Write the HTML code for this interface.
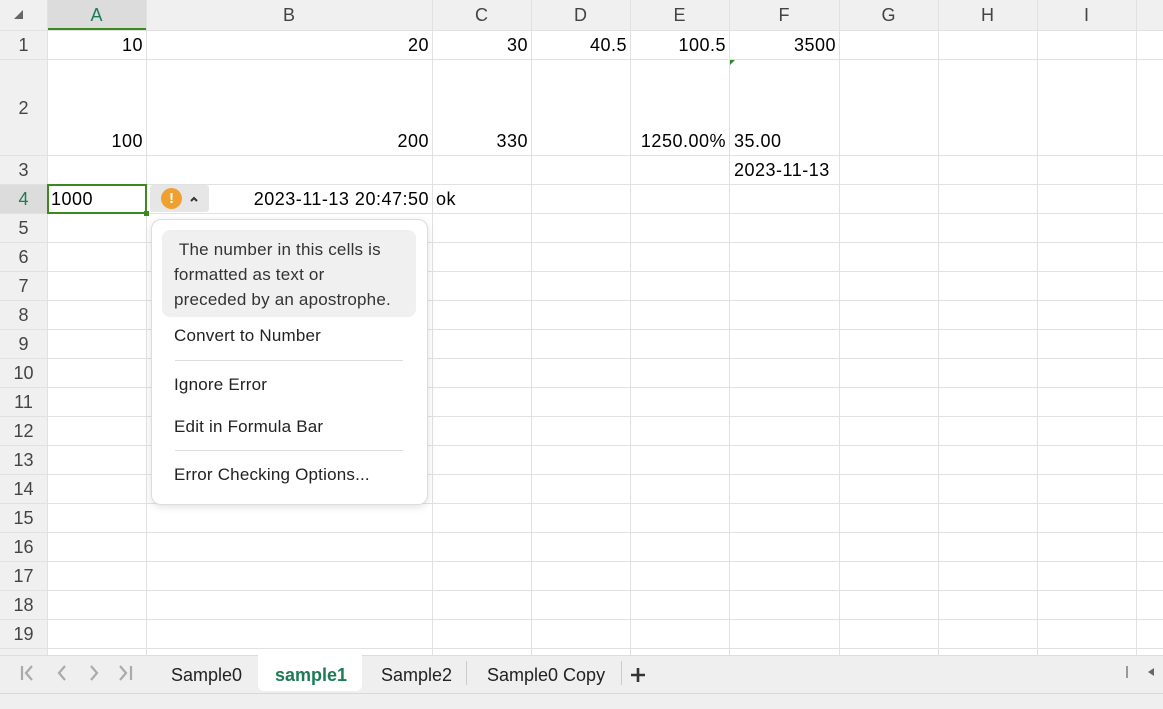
<!DOCTYPE html>
<html><head><style>
*{margin:0;padding:0;box-sizing:border-box}
body{width:1163px;height:709px;overflow:hidden;background:#fff;font-family:"Liberation Sans",sans-serif;position:relative;color:#000}
.a{position:absolute}
.vl{position:absolute;width:1px;background:#e1e1e1;top:0;height:655px}
.hl{position:absolute;height:1px;background:#e1e1e1;left:0;width:1163px}
.ch{position:absolute;top:0;height:30px;line-height:30px;text-align:center;font-size:18px;color:#444}
.rh{position:absolute;left:0;width:47px;text-align:center;font-size:18px;color:#444}
.t{position:absolute;font-size:18px;letter-spacing:0.5px;white-space:nowrap}
.r{text-align:right}
.mi{position:absolute;left:174px;font-size:17px;letter-spacing:0.2px;color:#222}
</style></head><body>
<div class="a" style="left:0;top:0;width:1163px;height:30px;background:#f0f0f0"></div>
<div class="a" style="left:0;top:0;width:47px;height:655px;background:#f0f0f0"></div>
<div class="a" style="left:47px;top:0;width:99px;height:30px;background:#dcdcdc;border-bottom:2px solid #3b8a1e"></div>
<div class="a" style="left:0;top:184px;width:47px;height:29px;background:#dcdcdc"></div>
<div class="a" style="left:14px;top:10px;width:0;height:0;border-left:9px solid transparent;border-bottom:9px solid #666"></div>

<div class="vl" style="left:47px"></div><div class="vl" style="left:146px"></div><div class="vl" style="left:432px"></div><div class="vl" style="left:531px"></div><div class="vl" style="left:630px"></div><div class="vl" style="left:729px"></div><div class="vl" style="left:839px"></div><div class="vl" style="left:938px"></div><div class="vl" style="left:1037px"></div><div class="vl" style="left:1136px"></div>
<div class="hl" style="top:30px"></div><div class="hl" style="top:59px"></div><div class="hl" style="top:155px"></div><div class="hl" style="top:184px"></div><div class="hl" style="top:213px"></div><div class="hl" style="top:242px"></div><div class="hl" style="top:271px"></div><div class="hl" style="top:300px"></div><div class="hl" style="top:329px"></div><div class="hl" style="top:358px"></div><div class="hl" style="top:387px"></div><div class="hl" style="top:416px"></div><div class="hl" style="top:445px"></div><div class="hl" style="top:474px"></div><div class="hl" style="top:503px"></div><div class="hl" style="top:532px"></div><div class="hl" style="top:561px"></div><div class="hl" style="top:590px"></div><div class="hl" style="top:619px"></div><div class="hl" style="top:648px"></div>

<div class="ch" style="left:47px;width:99px;color:#1e7b55">A</div><div class="ch" style="left:146px;width:286px">B</div><div class="ch" style="left:432px;width:99px">C</div><div class="ch" style="left:531px;width:99px">D</div><div class="ch" style="left:630px;width:99px">E</div><div class="ch" style="left:729px;width:110px">F</div><div class="ch" style="left:839px;width:99px">G</div><div class="ch" style="left:938px;width:99px">H</div><div class="ch" style="left:1037px;width:99px">I</div>

<div class="rh" style="top:31px;line-height:29px">1</div>
<div class="rh" style="top:60px;line-height:96px">2</div>
<div class="rh" style="top:156px;line-height:29px">3</div>
<div class="rh" style="top:185px;line-height:29px;color:#1e7b55">4</div>
<div class="rh" style="top:214px;line-height:29px">5</div><div class="rh" style="top:243px;line-height:29px">6</div><div class="rh" style="top:272px;line-height:29px">7</div><div class="rh" style="top:301px;line-height:29px">8</div><div class="rh" style="top:330px;line-height:29px">9</div><div class="rh" style="top:359px;line-height:29px">10</div><div class="rh" style="top:388px;line-height:29px">11</div><div class="rh" style="top:417px;line-height:29px">12</div><div class="rh" style="top:446px;line-height:29px">13</div><div class="rh" style="top:475px;line-height:29px">14</div><div class="rh" style="top:504px;line-height:29px">15</div><div class="rh" style="top:533px;line-height:29px">16</div><div class="rh" style="top:562px;line-height:29px">17</div><div class="rh" style="top:591px;line-height:29px">18</div><div class="rh" style="top:620px;line-height:29px">19</div>

<div class="t r" style="left:47px;width:96px;top:35px">10</div>
<div class="t r" style="left:146px;width:283px;top:35px">20</div>
<div class="t r" style="left:432px;width:96px;top:35px">30</div>
<div class="t r" style="left:531px;width:96px;top:35px">40.5</div>
<div class="t r" style="left:630px;width:96px;top:35px">100.5</div>
<div class="t r" style="left:729px;width:107px;top:35px">3500</div>
<div class="a" style="left:730px;top:60px;width:0;height:0;border-top:5px solid #2a8a2a;border-right:5px solid transparent"></div>
<div class="t r" style="left:47px;width:96px;top:131px">100</div>
<div class="t r" style="left:146px;width:283px;top:131px">200</div>
<div class="t r" style="left:432px;width:96px;top:131px">330</div>
<div class="t r" style="left:630px;width:96px;top:131px">1250.00%</div>
<div class="t" style="left:734px;top:131px">35.00</div>
<div class="t" style="left:734px;top:160px">2023-11-13</div>
<div class="t" style="left:51px;top:189px">1000</div>
<div class="t r" style="left:146px;width:283px;top:189px">2023-11-13 20:47:50</div>
<div class="t" style="left:436px;top:189px">ok</div>

<div class="a" style="left:47px;top:184px;width:100px;height:30px;border:2px solid #3b8a1e"></div>
<div class="a" style="left:144px;top:211px;width:5px;height:5px;background:#3b8a1e"></div>

<div class="a" style="left:150px;top:185px;width:59px;height:27px;background:#e6e6e6;border-radius:3px"></div>
<div class="a" style="left:161px;top:188px;width:21px;height:21px;border-radius:50%;background:#f0a030;color:#fff;font-weight:bold;font-size:15px;text-align:center;line-height:21px">!</div>
<svg class="a" style="left:189px;top:195px" width="10" height="8"><path d="M2 6 L5 3 L8 6" stroke="#333" stroke-width="2" fill="none"/></svg>

<div class="a" style="left:151px;top:219px;width:277px;height:286px;background:#fff;border:1px solid #ddd;border-radius:10px;box-shadow:0 2px 8px rgba(0,0,0,.12)"></div>
<div class="a" style="left:162px;top:230px;width:254px;height:87px;background:#f0f0f0;border-radius:8px"></div>
<div class="a" style="left:174px;top:237px;font-size:17px;letter-spacing:0.2px;line-height:25px;color:#333;white-space:nowrap">&nbsp;The number in this cells is<br>formatted as text or<br>preceded by an apostrophe.</div>
<div class="mi" style="top:326px">Convert to Number</div>
<div class="a" style="left:175px;top:360px;width:228px;height:1px;background:#ddd"></div>
<div class="mi" style="top:375px">Ignore Error</div>
<div class="mi" style="top:417px">Edit in Formula Bar</div>
<div class="a" style="left:175px;top:450px;width:228px;height:1px;background:#ddd"></div>
<div class="mi" style="top:465px">Error Checking Options...</div>

<div class="a" style="left:0;top:655px;width:1163px;height:54px;background:#efefef;border-top:1px solid #ddd"></div>
<div class="a" style="left:0;top:693px;width:1163px;height:1px;background:#d8d8d8"></div>
<svg class="a" style="left:18px;top:662px" width="120" height="22" fill="none" stroke="#aaa" stroke-width="2.2">
<path d="M4 4 V18 M14 4 L8 11 L14 18"/><path d="M47 4 L41 11 L47 18"/><path d="M73 4 L79 11 L73 18"/><path d="M102 4 L108 11 L102 18 M113 4 V18"/></svg>
<div class="a" style="left:258px;top:655px;width:104px;height:36px;background:#fff;border-radius:0 0 6px 6px"></div>
<div class="t" style="left:171px;top:665px;color:#222;letter-spacing:0">Sample0</div>
<div class="t" style="left:275px;top:665px;color:#1e7b55;font-weight:bold;letter-spacing:0">sample1</div>
<div class="t" style="left:381px;top:665px;color:#222;letter-spacing:0">Sample2</div>
<div class="a" style="left:466px;top:661px;width:1px;height:24px;background:#ccc"></div>
<div class="t" style="left:487px;top:665px;color:#222;letter-spacing:0">Sample0 Copy</div>
<div class="a" style="left:621px;top:661px;width:1px;height:24px;background:#ccc"></div>
<svg class="a" style="left:629px;top:666px" width="18" height="18"><path d="M9 2 V16 M2 9 H16" stroke="#333" stroke-width="2.6"/></svg>
<div class="a" style="left:1126px;top:666px;width:2px;height:12px;background:#999"></div>
<div class="a" style="left:1148px;top:668px;width:0;height:0;border-top:4px solid transparent;border-bottom:4px solid transparent;border-right:6px solid #666"></div>
</body></html>
